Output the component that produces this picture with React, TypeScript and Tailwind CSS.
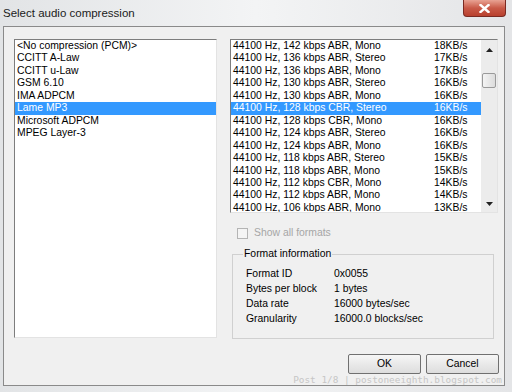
import { FC } from 'react'

const codecs = [
	'<No compression (PCM)>',
	'CCITT A-Law',
	'CCITT u-Law',
	'GSM 6.10',
	'IMA ADPCM',
	'Lame MP3',
	'Microsoft ADPCM',
	'MPEG Layer-3',
]

const formats: [string, string][] = [
	['44100 Hz, 142 kbps ABR, Mono', '18KB/s'],
	['44100 Hz, 136 kbps ABR, Stereo', '17KB/s'],
	['44100 Hz, 136 kbps ABR, Mono', '17KB/s'],
	['44100 Hz, 130 kbps ABR, Stereo', '16KB/s'],
	['44100 Hz, 130 kbps ABR, Mono', '16KB/s'],
	['44100 Hz, 128 kbps CBR, Stereo', '16KB/s'],
	['44100 Hz, 128 kbps CBR, Mono', '16KB/s'],
	['44100 Hz, 124 kbps ABR, Stereo', '16KB/s'],
	['44100 Hz, 124 kbps ABR, Mono', '16KB/s'],
	['44100 Hz, 118 kbps ABR, Stereo', '15KB/s'],
	['44100 Hz, 118 kbps ABR, Mono', '15KB/s'],
	['44100 Hz, 112 kbps CBR, Mono', '14KB/s'],
	['44100 Hz, 112 kbps ABR, Mono', '14KB/s'],
	['44100 Hz, 106 kbps ABR, Mono', '13KB/s'],
]

const info: [string, string][] = [
	['Format ID', '0x0055'],
	['Bytes per block', '1 bytes'],
	['Data rate', '16000 bytes/sec'],
	['Granularity', '16000.0 blocks/sec'],
]

const App: FC = () => {
	return (
		<div className="w-[512px] h-[392px] overflow-hidden relative bg-gradient-to-r from-[#e2e4e6] via-[#f3f4f5] to-[#e4e5e7] text-black font-['Liberation_Sans',Arial,sans-serif]">
			{/* title bar */}
			<div className="h-[26px] flex justify-between pl-[3px] pr-[6px]">
				<span className="text-[11.5px] leading-[26px] text-[#1b1b1b]">
					Select audio compression
				</span>
				<button className="w-[43px] h-[17px] rounded-b-[4px] border border-t-0 border-[#7a2a22] bg-gradient-to-b from-[#e8a293] via-[#c95a48] to-[#b8402e] flex items-center justify-center">
					<svg width="11" height="9" viewBox="0 0 11 9">
						<path
							d="M1.5 1 L9.5 8 M9.5 1 L1.5 8"
							stroke="#fff"
							strokeWidth="2.4"
							strokeLinecap="square"
						/>
					</svg>
				</button>
			</div>

			{/* dialog body */}
			<div className="ml-[3px] w-[502px] h-[360px] border border-[#8a8a8a] bg-[#f0f0f0] pl-[10px] pt-[12px] text-[10.4px]">
				<div className="flex gap-[13px]">
					<div className="w-[203px] h-[299px] bg-white border border-t-[#7d7d7d] border-l-[#7d7d7d] border-b-[#e3e3e3] border-r-[#e3e3e3]">
						{codecs.map((c) => (
							<div
								key={c}
								className={`h-[12.46px] leading-[12.46px] pl-[2px] whitespace-nowrap ${
									c === 'Lame MP3' ? 'bg-[#3399ff] text-white' : ''
								}`}
							>
								{c}
							</div>
						))}
					</div>

					<div className="w-[268px] flex flex-col">
						<div className="h-[174px] flex bg-white border border-t-[#7d7d7d] border-l-[#7d7d7d] border-b-[#e3e3e3] border-r-[#e3e3e3] overflow-hidden">
							<div className="flex-1">
								{formats.map(([f, r], i) => (
									<div
										key={f}
										className={`h-[12.46px] leading-[12.46px] flex pl-[2px] whitespace-nowrap ${
											i === 5 ? 'bg-[#3399ff] text-white' : ''
										}`}
									>
										<span className="w-[201px]">{f}</span>
										<span>{r}</span>
									</div>
								))}
							</div>
							<div className="w-[16px] bg-[#ececec] flex flex-col items-center">
								<svg width="7" height="4" viewBox="0 0 7 4" className="mt-[8px]">
									<path d="M3.5 0 L7 4 L0 4 Z" fill="#222" />
								</svg>
								<div className="mt-[21px] w-[14px] h-[15px] rounded-[2px] border border-[#9a9a9a] bg-gradient-to-r from-[#f4f4f4] to-[#dcdcdc]" />
								<div className="flex-1" />
								<svg width="7" height="4" viewBox="0 0 7 4" className="mb-[6px]">
									<path d="M0 0 L7 0 L3.5 4 Z" fill="#222" />
								</svg>
							</div>
						</div>

						<div className="mt-[14px] h-[12px] flex items-center pl-[7px] gap-[6px] text-[#a6a6a6]">
							<span className="w-[11px] h-[11px] border border-[#b4b4b4] bg-[#f4f4f4]" />
							<span>Show all formats</span>
						</div>

						<div className="relative mt-[15px] ml-[2px] w-[262px] h-[85px] border border-[#d0d0d0] pt-[11px] pl-[13px]">
							<span className="absolute -top-[7px] left-[10px] bg-[#f0f0f0] px-[1px] leading-[12px]">
								Format information
							</span>
							{info.map(([k, v]) => (
								<div key={k} className="flex h-[15px] leading-[15px]">
									<span className="w-[88px]">{k}</span>
									<span>{v}</span>
								</div>
							))}
						</div>
					</div>
				</div>

				<div className="mt-[15px] flex justify-end gap-[5px] pr-[5px]">
					<button className="w-[73px] h-[20px] border border-[#707070] rounded-[2px] bg-gradient-to-b from-[#f6f6f6] to-[#dddddd] text-[10.4px]">
						OK
					</button>
					<button className="w-[73px] h-[20px] border border-[#707070] rounded-[2px] bg-gradient-to-b from-[#f6f6f6] to-[#dddddd] text-[10.4px]">
						Cancel
					</button>
				</div>
			</div>

			<span className="absolute right-[10px] bottom-[5px] font-['DejaVu_Sans_Mono',monospace] text-[9.4px] text-[#c6c6c6] whitespace-nowrap">
				Post 1/8 | postoneeighth.blogspot.com
			</span>
		</div>
	)
}

export default App
